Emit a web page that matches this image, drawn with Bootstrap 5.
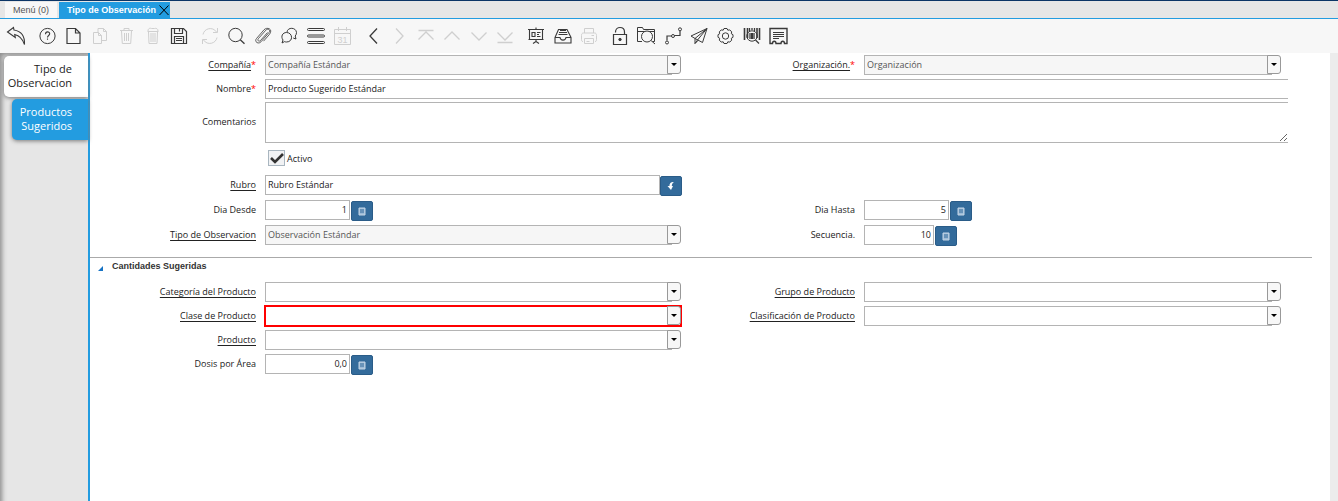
<!DOCTYPE html>
<html lang="es">
<head>
<meta charset="utf-8">
<meta name="viewport" content="width=device-width, initial-scale=1">
<title>Tipo de Observación</title>
<link href="https://cdn.jsdelivr.net/npm/bootstrap@5.3.0/dist/css/bootstrap.min.css" rel="stylesheet">
<style>
:root{--accent:#239ce0;--line:#b4b4b4;--steel:#336b9b}
body{font-family:"Open Sans","Noto Sans",sans-serif;font-size:9px;line-height:20px;color:#222;background:#fff}
button{line-height:1}
/* window tabs */
.win-tabs{height:19px;background:#e6e6e6;border-top:1px solid #0b3566;border-bottom:1px solid var(--accent);padding:1px 0 0 5px;gap:2px;font-family:"Liberation Sans",sans-serif}
.win-tab{border:0;background:#f7f7f7;color:#555;font-size:9px;line-height:16px;padding:0 8px}
.win-tab.active{background:var(--accent);color:#fff;font-weight:700}
.win-close{border:0;background:none;padding:0;width:12px;height:16px;margin-left:2px}
/* toolbar */
.tool-bar{height:34px;background:#f7f7f7;padding:0 4px;gap:7px}
.tools{flex:none}
.tools-3{width:77px}.tools-6{width:156px}.tools-7{width:182px}
.tool{border:0;background:none;padding:0;width:24px;height:24px;color:#3a3a3a}
.tool:disabled{color:#cfcfcf}
svg{display:block;fill:none;stroke:currentColor;stroke-width:1}
/* side tabs */
.side{width:90px;flex:none;background:#e6e6e6;border-right:2px solid var(--accent);box-shadow:inset 4px 4px 5px -2px #8c8c8c;padding:3px 0 0 4px;gap:2px}
.side-tab{border:0;border-radius:5px 0 0 5px;text-align:right;font-size:11px;line-height:14px;padding:6px 16px 7px 0;background:#fff;color:#222;box-shadow:0 1px 4px #777}
.side-tab.active{margin-left:8px;background:var(--accent);color:#fff}
.edge{width:8px;background:#ececec}
/* form */
.form-area{margin-right:18px}
.fields{display:grid;grid-template-columns:175fr 416fr 183fr 417fr 31fr;align-items:start}
.fields-main{padding-top:2px;grid-template-rows:24px 23px 48px 25px;grid-auto-rows:25px}
.fields-more{grid-auto-rows:24px;padding-top:7px}
.cap{text-align:right;padding-right:9px;grid-column:1;white-space:nowrap;text-underline-offset:2px}
.cap-2{grid-column:3}
.cap-area{line-height:40px}
.cap i{color:red;font-style:normal}
.wide{grid-column:2/-1;margin-right:24px}
.box{border:1px solid var(--line);border-radius:0;background:#fff;color:#222;height:20px;padding:0 2px;font-size:9px;line-height:18px;width:100%;display:block;appearance:none;outline:0}
input.box{padding-bottom:2px}
.wide .box{border-right:0}
textarea.box{height:41px;resize:vertical}
.combo{position:relative;height:20px}
.combo .box{width:calc(100% - 9px);opacity:1}
.combo .box:disabled{background:#f6f6f6;color:#555}
.combo::after{content:"";position:absolute;right:0;top:0;width:14px;height:19px;border:1px solid #999;border-radius:0 3px 3px 0;background:#f7f7f7 url("data:image/svg+xml,%3Csvg xmlns='http://www.w3.org/2000/svg' viewBox='0 0 6 3'%3E%3Cpath d='M0 0h6L3 3z'/%3E%3C/svg%3E") center/6px 3px no-repeat;pointer-events:none}
.combo.invalid{outline:2px solid red;outline-offset:-1px}
.num{width:85px;text-align:right}
.num-s{width:70px}
.num + .act{margin-left:1px}
.act{flex:none;width:22px;height:20px;border:1px solid #2a5c88;border-radius:2px;background:var(--steel);color:#fff;padding:0;margin-top:1px;display:flex;align-items:center;justify-content:center}
.find .act{margin-right:-1px}
.tick-row{padding-left:3px;gap:2px}
.tick{appearance:none;width:17px;height:16px;margin:0;border:1px solid #a9b6c0;background:#f1f2f4 url("data:image/svg+xml,%3Csvg xmlns='http://www.w3.org/2000/svg' viewBox='0 0 15 14'%3E%3Cpath d='M2 7l4 4 8-8' fill='none' stroke='%23333' stroke-width='2.6'/%3E%3C/svg%3E") center/15px 14px no-repeat}
.group-head{border:0;border-top:1px solid #aaa;background:none;width:100%;height:18px;margin-top:7px;padding:0 0 0 8px;gap:9px;font:700 9px/17px "Liberation Sans",sans-serif;color:#333;text-align:left}
</style>
</head>
<body class="d-flex flex-column min-vh-100">
<nav class="win-tabs d-flex" aria-label="Ventanas">
  <button class="win-tab">Menú (0)</button>
  <div class="d-flex win-tab active p-0">
    <button class="win-tab active pe-0">Tipo de Observación</button>
    <button class="win-close" aria-label="Cerrar"><svg width="12" height="16" stroke="#153a5c"><path d="M1.500 3.500l9 9.500M10.500 3.500l-9 9.500"/></svg></button>
  </div>
</nav>

<div class="tool-bar d-flex align-items-center" role="toolbar" aria-label="Acciones">
  <button class="tool" aria-label="Deshacer"><svg width="24" height="24"><path d="M3.500 8L9.500 3.500 10 6C16 7 21 11 20.500 20.500 18.500 14.500 15 11.500 10.700 10.500l.6 3z" stroke-width="1.100"/></svg></button>
  <div class="tools tools-6 d-flex justify-content-between">
    <button class="tool" aria-label="Ayuda"><svg width="24" height="24"><circle cx="12.500" cy="12" r="7.600"/><path d="M10.500 10.300c0-3.300 4.200-3 4.200-.5 0 1.700-2.200 1.700-2.200 3.700M12.500 14.500v1.300" stroke-width="1.100"/></svg></button>
    <button class="tool" aria-label="Nuevo"><svg width="24" height="24"><path d="M6 4.500h8.500l4.500 4.500v10.500H6zM14.500 4.500v4.500H19" stroke-width="1.200"/></svg></button>
    <button class="tool" disabled aria-label="Copiar"><svg width="24" height="24"><path d="M5.500 8.500h5l3 3v8h-8zM10.500 8.500v3h3M10 8.500v-4h5.500l3 3v9h-5M15.500 4.500v3h3"/></svg></button>
    <button class="tool" disabled aria-label="Borrar"><svg width="24" height="24"><path d="M6 6.500h13M10 6V4.500h5V6M7.500 7l.8 12.500h8.400L17.500 7M10.500 9v8M12.500 9v8M14.500 9v8"/></svg></button>
    <button class="tool" disabled aria-label="Borrar selección"><svg width="24" height="24"><path d="M6.500 7.500h11M7 7c0-3 2.500-3 3.500-2.500h3c1.500-.5 3.500 0 3.500 2.500M7.500 8l.5 11.500h8l.5-11.500M10 9v9M12 9v9M14 9v9"/></svg></button>
    <button class="tool" aria-label="Guardar"><svg width="24" height="24"><path d="M4.500 4.500h12l3 3v12h-15zM7.500 4.500v5h8v-5M12.500 5v2.500M7.500 19.500v-7h9v7M9 14.500h6M9 16.500h6" stroke-width="1.200"/></svg></button>
  </div>
  <div class="tools tools-6 d-flex justify-content-between">
    <button class="tool" disabled aria-label="Refrescar"><svg width="24" height="24"><path d="M5 10.500C6 4.500 14.500 2 18.500 8M19.500 4v4.500H15M19 13.500C18 19.500 9.500 22 5.500 16M4.500 20v-4.500H9"/></svg></button>
    <button class="tool" aria-label="Buscar"><svg width="24" height="24"><circle cx="11.500" cy="11" r="6.700"/><path d="M16.300 15.800l4.200 4" stroke-width="1.300"/></svg></button>
    <button class="tool" aria-label="Adjunto"><svg width="24" height="24"><path d="M16.500 8.500l-7 8c-1.500 1.500-3.500 0-2.200-1.800l7.500-8.500c2.200-2.300 5 0 3.200 2.300l-8 9.300c-3 3-7-.3-4.500-3.300l7.500-8.700c3-3.300 9.500-.8 5.500 4.500l-6 6.900" stroke-width=".8"/></svg></button>
    <button class="tool" aria-label="Chat"><svg width="24" height="24"><path d="M5 19l1-3c-2.500-3.500-.5-7.500 3.500-7.500 6.500 0 7 9.500 0 9.500-1 0-1.500-.2-2-.4zM10 8c.5-5 9-5 9.500.5 0 1.500-.5 2.500-1.300 3.500l.8 3-2.800-1"/></svg></button>
    <button class="tool" aria-label="Vista de lista"><svg width="24" height="24"><rect x="3.500" y="4.500" width="17" height="2" rx="1"/><rect x="3.500" y="11" width="17" height="2" rx="1"/><rect x="3.500" y="17.500" width="17" height="2" rx="1"/></svg></button>
    <button class="tool" disabled aria-label="Calendario"><svg width="24" height="24"><path d="M4.500 5.500h16v15h-16zM4.500 9.500h16M8.500 3v4M16.500 3v4"/><text x="12.500" y="18.500" text-anchor="middle" font-family="Liberation Sans" font-size="9" fill="currentColor" stroke="none">31</text></svg></button>
  </div>
  <div class="tools tools-6 d-flex justify-content-between">
    <button class="tool" aria-label="Anterior"><svg width="24" height="24"><path d="M16 4.500l-7 7.500 7 7.500" stroke-width="1.300"/></svg></button>
    <button class="tool" disabled aria-label="Siguiente"><svg width="24" height="24"><path d="M9 4.500l7 7.500-7 7.500" stroke-width="1.300"/></svg></button>
    <button class="tool" disabled aria-label="Primer registro"><svg width="24" height="24"><path d="M4.500 6.500h15M4.500 15.500L12 8l7.500 7.500" stroke-width="1.300"/></svg></button>
    <button class="tool" disabled aria-label="Registro previo"><svg width="24" height="24"><path d="M4.500 15.500L12 8l7.500 7.500" stroke-width="1.300"/></svg></button>
    <button class="tool" disabled aria-label="Registro próximo"><svg width="24" height="24"><path d="M4.500 8.500l7.500 7.500 7.500-7.500" stroke-width="1.300"/></svg></button>
    <button class="tool" disabled aria-label="Último registro"><svg width="24" height="24"><path d="M4.500 18.500h15M4.500 8.500l7.500 7.500 7.500-7.500" stroke-width="1.300"/></svg></button>
  </div>
  <div class="tools tools-3 d-flex justify-content-between">
    <button class="tool" aria-label="Informe"><svg width="24" height="24"><path d="M4 5.500h16M12 3.500v2M5.500 6v9.500h13V6M4.500 15.500h15M12 16v2M12 17.500l-3 2M12 17.500l3 2M8 8.500h3v4H8zM13 8.500h3.500M13 10.500h2M13 12.500h3.500" stroke-width="1.100"/></svg></button>
    <button class="tool" aria-label="Archivo"><svg width="24" height="24"><path d="M4 13.500l3.500-8h8.500l4 8v5.500H4zM4 13.500h5c.5 3.500 5.500 3.500 6 0h5M8 8.500h8M7.500 10.500h9M9 6.500h6" stroke-width="1.100"/></svg></button>
    <button class="tool" disabled aria-label="Imprimir"><svg width="24" height="24"><path d="M7.500 9V4.500h9V9M6 17.500c-1.500 0-1.500-1-1.500-2v-4c0-1.500.5-2.500 2-2.500h11c1.500 0 2 1 2 2.500v4c0 1 0 2-1.500 2M7.500 14.500h9v5h-9zM9.500 17.500h3M14.500 11.500h2.500"/></svg></button>
  </div>
  <div class="tools tools-7 d-flex justify-content-between">
    <button class="tool" aria-label="Bloqueo"><svg width="24" height="24"><path d="M5.500 10.500h13v10h-13zM7.500 8.500V8c0-6 9-6 9 0v2.500" stroke-width="1.200"/><circle cx="12" cy="15.500" r="1.200" fill="currentColor"/></svg></button>
    <button class="tool" aria-label="Acercar"><svg width="24" height="24"><path d="M8 17.500H3.500v-14h5l1 2h11v12h-2M3.500 7.500h17M17 16.500l4 3.500"/><circle cx="13" cy="12.500" r="5.500" fill="#f7f7f7"/></svg></button>
    <button class="tool" aria-label="Flujo de trabajo"><svg width="24" height="24"><path d="M6 16.500v-4.500h4.500M13.500 11.500H19V7" stroke-width="1.200"/><circle cx="6" cy="18.500" r="1.500"/><circle cx="12" cy="12" r="1.500"/><circle cx="19" cy="5.300" r="1.500"/></svg></button>
    <button class="tool" aria-label="Solicitudes"><svg width="24" height="24"><path d="M20 4.500L4 12l4 2.500 7.500 4zM20 4.500L8 14.500v5l2.500-3.500zM8 19.500l3-3"/></svg></button>
    <button class="tool" aria-label="Proceso"><svg width="24" height="24"><circle cx="12.500" cy="12" r="3.200"/><path d="M11 4.500h3l.8 1.700 2-.3 1.900 2-.4 1.800 1.700 1v2.600l-1.700 1 .4 1.800-1.900 2-2-.3-.8 1.700h-3l-.8-1.700-2 .3-1.900-2 .4-1.800-1.700-1v-2.600l1.700-1-.4-1.800 1.900-2 2 .3z" stroke-linejoin="round"/></svg></button>
    <button class="tool" aria-label="Información de producto"><svg width="24" height="24"><path d="M4.500 4v12M7.500 4v10M17 4v10M19.500 4v12" stroke-width="1.600"/><path d="M9.500 4v3M12 4v2M14.500 4v3M10 9v6M14 9v6" stroke-width="1.300"/><path d="M12 9v6" stroke-width="2"/><circle cx="12" cy="12" r="5.200"/><path d="M15.500 16l3.500 3.500" stroke-width="1.300"/></svg></button>
    <button class="tool" aria-label="Factura"><svg width="24" height="24"><path d="M4 4.500h17v15h-2.500c0-3-3.500-3-3.500 0h-5c0-3-3.500-3-3.500 0H4z" stroke-width="1.400"/><path d="M7 8.500h11M7 10.500h11M7 12.500h11M7 14.500h6" stroke-width="1.100"/></svg></button>
  </div>
</div>

<div class="d-flex flex-grow-1">
  <nav class="side d-flex flex-column" aria-label="Pestañas">
    <button class="side-tab">Tipo de<br>Observacion</button>
    <button class="side-tab active">Productos<br>Sugeridos</button>
  </nav>
  <main class="flex-grow-1">
    <form class="form-area">
      <div class="fields fields-main">
        <label class="cap" for="compania"><u>Compañía</u><i>*</i></label>
        <div class="combo"><select class="box" id="compania" disabled><option>Compañía Estándar</option></select></div>
        <label class="cap cap-2" for="org"><u>Organización.</u><i>*</i></label>
        <div class="combo"><select class="box" id="org" disabled><option>Organización</option></select></div>

        <label class="cap" for="nombre">Nombre<i>*</i></label>
        <div class="wide"><input class="box" id="nombre" value="Producto Sugerido Estándar"></div>

        <label class="cap cap-area" for="coment">Comentarios</label>
        <div class="wide"><textarea class="box" id="coment"></textarea></div>

        <div class="wide tick-row d-flex align-items-center">
          <input class="tick" type="checkbox" id="activo" checked><label class="lh-1" for="activo">Activo</label>
        </div>

        <label class="cap" for="rubro"><u>Rubro</u></label>
        <div class="find d-flex"><input class="box" id="rubro" value="Rubro Estándar"><button type="button" class="act" aria-label="Buscar rubro"><svg width="10" height="10"><path d="M8 1C4.500 1 3.500 2.500 3.500 5H1.500L5 9l2-4H5.800C5.800 3 6.500 2 8 1z" fill="#fff" stroke="none"/></svg></button></div>

        <label class="cap" for="desde">Dia Desde</label>
        <div class="d-flex"><input class="box num" id="desde" value="1"><button type="button" class="act" aria-label="Calculadora"><svg width="8" height="9"><path d="M1 1h6v7H1z" fill="#9dbbd6" stroke="#c5d6e6"/><path d="M2 3h4M2 5h4" stroke="#336b9b"/></svg></button></div>
        <label class="cap cap-2" for="hasta">Dia Hasta</label>
        <div class="d-flex"><input class="box num" id="hasta" value="5"><button type="button" class="act" aria-label="Calculadora"><svg width="8" height="9"><path d="M1 1h6v7H1z" fill="#9dbbd6" stroke="#c5d6e6"/><path d="M2 3h4M2 5h4" stroke="#336b9b"/></svg></button></div>

        <label class="cap" for="tipo"><u>Tipo de Observacion</u></label>
        <div class="combo"><select class="box" id="tipo" disabled><option>Observación Estándar</option></select></div>
        <label class="cap cap-2" for="sec">Secuencia.</label>
        <div class="d-flex"><input class="box num num-s" id="sec" value="10"><button type="button" class="act" aria-label="Calculadora"><svg width="8" height="9"><path d="M1 1h6v7H1z" fill="#9dbbd6" stroke="#c5d6e6"/><path d="M2 3h4M2 5h4" stroke="#336b9b"/></svg></button></div>
      </div>

      <button type="button" class="group-head d-flex align-items-center" aria-expanded="true"><svg width="5" height="5" class="mt-1"><path d="M5 0v5H0z" fill="#1673c4" stroke="none"/></svg>Cantidades Sugeridas</button>

      <div class="fields fields-more">
        <label class="cap" for="cat"><u>Categoría del Producto</u></label>
        <div class="combo"><select class="box" id="cat"><option></option></select></div>
        <label class="cap cap-2" for="grupo"><u>Grupo de Producto</u></label>
        <div class="combo"><select class="box" id="grupo"><option></option></select></div>

        <label class="cap" for="clase"><u>Clase de Producto</u></label>
        <div class="combo invalid"><select class="box" id="clase"><option></option></select></div>
        <label class="cap cap-2" for="clasif"><u>Clasificación de Producto</u></label>
        <div class="combo"><select class="box" id="clasif"><option></option></select></div>

        <label class="cap" for="prod"><u>Producto</u></label>
        <div class="combo"><select class="box" id="prod"><option></option></select></div>

        <label class="cap" for="dosis">Dosis por Área</label>
        <div class="d-flex"><input class="box num" id="dosis" value="0,0"><button type="button" class="act" aria-label="Calculadora"><svg width="8" height="9"><path d="M1 1h6v7H1z" fill="#9dbbd6" stroke="#c5d6e6"/><path d="M2 3h4M2 5h4" stroke="#336b9b"/></svg></button></div>
      </div>
    </form>
  </main>
  <div class="edge"></div>
</div>
<script src="https://cdn.jsdelivr.net/npm/bootstrap@5.3.0/dist/js/bootstrap.bundle.min.js"></script>
</body>
</html>
